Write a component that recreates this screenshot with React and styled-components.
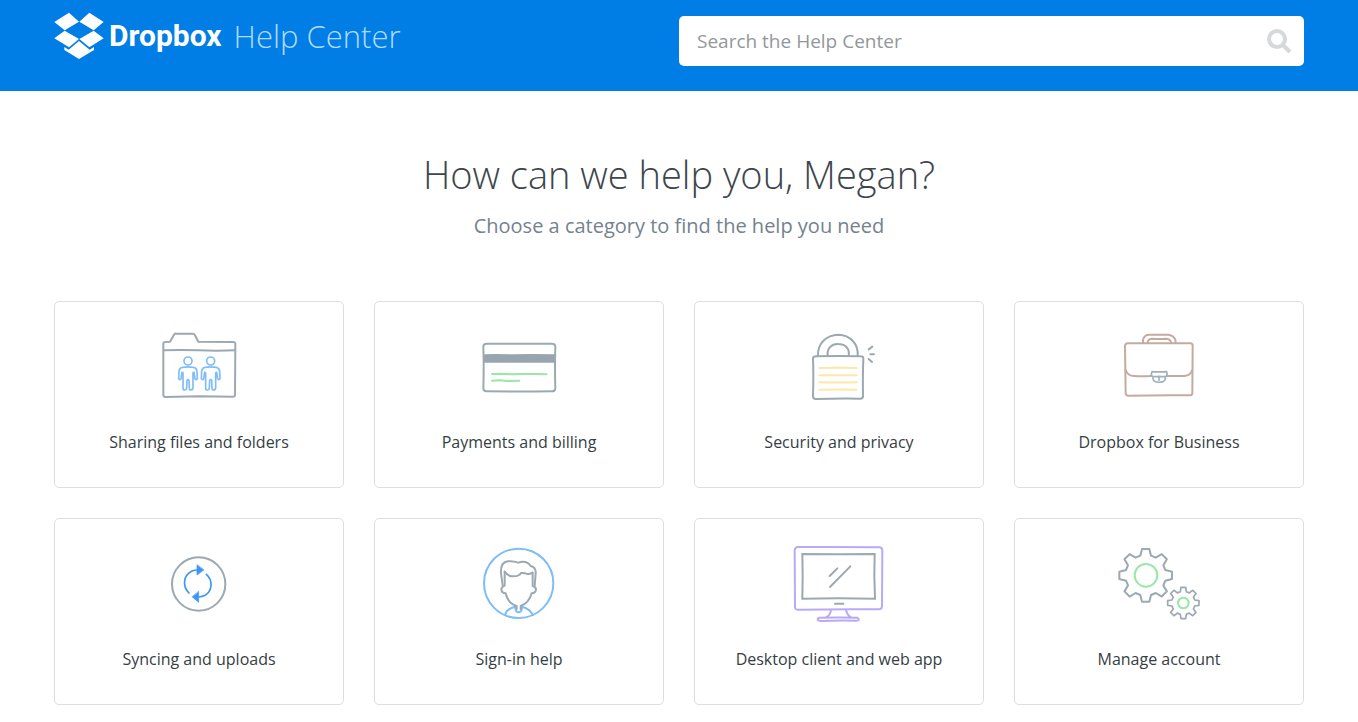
import React from 'react';
import styled, { createGlobalStyle } from 'styled-components';

const GlobalStyle = createGlobalStyle`
  *, *::before, *::after { box-sizing: border-box; }
  body {
    margin: 0;
    background: #fff;
    color: #3d464d;
    font-family: 'Open Sans', 'Noto Sans', sans-serif;
    -webkit-font-smoothing: antialiased;
  }
`;

const Header = styled.header`
  background: #007ee5;
  padding: 0 54px;
`;

const HeaderInner = styled.div`
  display: flex;
  justify-content: space-between;
  align-items: flex-start;
  gap: 30px;
  max-width: 1250px;
  margin: 0 auto;
  padding: 12px 0 25px;
`;

const Brand = styled.a`
  display: flex;
  align-items: center;
  height: 48px;
  color: #fff;
  text-decoration: none;
  white-space: nowrap;
`;

const Wordmark = styled.span`
  margin-left: 5px;
  font-family: Roboto, 'Open Sans', sans-serif;
  font-size: 30px;
  font-weight: 700;
  line-height: 48px;
`;

const SiteName = styled.span`
  margin-left: 12px;
  font-size: 31px;
  font-weight: 300;
  line-height: 48px;
  color: #b3dbff;
`;

const SearchForm = styled.form`
  display: flex;
  align-items: center;
  width: 50%;
  height: 50px;
  margin-top: 4px;
  padding: 0 12px 0 18px;
  background: #fff;
  border-radius: 5px;
`;

const SearchInput = styled.input`
  flex: 1;
  min-width: 0;
  padding: 0;
  border: 0;
  outline: 0;
  background: transparent;
  font-family: inherit;
  font-size: 19px;
  line-height: 26px;
  color: #3d464d;
  &::placeholder { color: #92979b; opacity: 1; }
`;

const SearchButton = styled.button`
  display: flex;
  padding: 0;
  border: 0;
  background: none;
  cursor: pointer;
`;

const Main = styled.main`
  max-width: 1358px;
  margin: 0 auto;
  padding: 55px 54px 17px;
`;

const Title = styled.h1`
  margin: 0;
  font-size: 38px;
  font-weight: 300;
  line-height: 56px;
  text-align: center;
`;

const Subtitle = styled.p`
  margin: 10px 0 0;
  font-size: 20px;
  font-weight: 500;
  line-height: 28px;
  text-align: center;
  color: #74828d;
`;

const Grid = styled.nav`
  display: grid;
  grid-template-columns: repeat(4, minmax(0, 1fr));
  gap: 30px;
  margin-top: 61px;
`;

const Card = styled.a`
  display: flex;
  flex-direction: column;
  align-items: center;
  padding: 20px 8px 33px;
  border: 1px solid #dcdfe2;
  border-radius: 5px;
  color: #363e45;
  text-decoration: none;
`;

const CardLabel = styled.span`
  margin-top: 18px;
  font-size: 16px;
  font-weight: 500;
  line-height: 24px;
  text-align: center;
`;

const Art = styled.svg`
  width: 110px;
  height: 90px;
  fill: none;
  stroke: #9ca9b1;
  stroke-width: 6;
  stroke-linecap: round;
  stroke-linejoin: round;
`;

const BLUE = '#7fbcf8';
const GREEN = '#9be6a8';
const YELLOW = '#ffe6ab';
const BROWN = '#c3aba2';
const PURPLE = '#b9aaf8';

function gearPath(cx, cy, outer, inner, top, base) {
  const points = [];
  for (let i = 0; i < 8; i += 1) {
    const a = (i * Math.PI) / 4;
    const dx = Math.cos(a);
    const dy = Math.sin(a);
    [[inner, -base], [outer, -top], [outer, top], [inner, base]].forEach(([r, t]) => {
      points.push(`${(cx + dx * r - dy * t).toFixed(1)} ${(cy + dy * r + dx * t).toFixed(1)}`);
    });
  }
  return `M${points.join('L')}Z`;
}

const Person = ({ x }) => (
  <g transform={`translate(${x} 0)`} stroke={BLUE} strokeWidth="5">
    <circle cx="0" cy="123" r="12" />
    <path d="M-16 142Q0 139 16 142Q26 143 27 154L28 176Q25 182 21 176L18 157L15 158V204Q14 210 8 210Q4 210 4 204L3 181Q0 176-3 181L-4 204Q-5 210-9 210Q-15 210-15 203V158L-18 157L-21 176Q-25 182-28 176L-27 154Q-26 143-16 142Z" />
  </g>
);

const FolderArt = () => (
  <Art viewBox="-18 6 330 270" aria-hidden="true">
    <path d="M40 224V72Q40 66 46 66L60 65L72 44Q74 40 78 41L128 41Q133 41 135 46L145 65L249 66Q257 66 256 74L255 224Q255 231 248 230L150 229L47 231Q40 231 40 224Z" />
    <path d="M41 91Q90 89 145 91T255 91" />
    <Person x={114} />
    <Person x={182} />
  </Art>
);

const CreditCardArt = () => (
  <Art viewBox="-18 -24 330 270" aria-hidden="true">
    <path d="M50 41Q150 42 246 41Q256 41 256 50Q254 110 256 175Q255 184 246 184Q150 185 50 184Q40 184 40 175Q42 110 40 50Q40 41 50 41Z" />
    <path d="M42 73L80 72L130 73L180 72L254 73V98H42Z" fill="#98a5ae" stroke="none" />
    <path d="M66 132L95 131L125 133L150 132L190 132L230 133M66 152L90 151L110 153L148 152" stroke={GREEN} />
  </Art>
);

const PadlockArt = () => (
  <Art viewBox="-48 -9 330 270" aria-hidden="true">
    <path d="M54 93C52 55 79 30 115 29C151 30 176 57 173 93M83 92C80 71 94 56 115 57C136 57 150 71 146 92" />
    <path d="M46 94Q115 92 182 94Q190 94 190 101Q188 150 189 214Q188 221 181 221Q115 220 47 222Q39 222 39 214Q41 150 39 102Q39 94 46 94Z" />
    <path d="M58 129Q115 128 170 129M58 151Q115 150 170 151M58 172Q115 173 170 172M58 194Q115 193 170 194" stroke={YELLOW} />
    <path d="M206 73L217 65M211 88H222M206 102L216 111" />
  </Art>
);

const BriefcaseArt = () => (
  <Art viewBox="-33 -9 330 270" aria-hidden="true">
    <g stroke={BROWN}>
      <path d="M38 55Q130 54 227 55Q234 56 233 64L232 205Q231 211 224 211Q130 210 39 212Q32 211 32 204L30 63Q31 55 38 55Z" />
      <path d="M84 53V44Q88 29 103 29H160Q176 31 181 44L182 53M98 53Q98 42 111 41Q132 43 154 41Q167 42 168 53" />
      <path d="M32 135Q38 153 57 153Q82 155 108 153M157 153L208 153Q227 151 232 135" />
    </g>
    <path d="M111 140Q132 141 155 140Q158 145 154 154Q143 156 133 154Q121 156 111 154Q107 147 111 140ZM113 156Q114 169 124 171Q134 173 144 170Q151 167 152 156M132 158V166" stroke="#9fb0bd" strokeWidth="5" />
  </Art>
);

const SyncArt = () => (
  <Art viewBox="-48 -18 330 270" aria-hidden="true">
    <circle cx="116" cy="117" r="80" />
    <g stroke="#3d97f1" strokeWidth="5">
      <path d="M87 144C66 123 70 91 96 78Q103 75 111 75M139 88C160 106 157 138 135 151Q127 155 117 156" />
      <path d="M111 60V90L131 75ZM116 140V172L97 156Z" fill="#3d97f1" strokeWidth="2" />
    </g>
  </Art>
);

const PersonArt = () => (
  <Art viewBox="-33 3 330 270" aria-hidden="true">
    <g stroke={BLUE}>
      <circle cx="131" cy="136" r="104" />
      <path d="M90 231Q95 212 121 206M141 206Q166 213 173 231M121 206Q121 223 131 223Q141 222 141 206" />
    </g>
    <path d="M89 101V143Q79 147 79 155Q80 165 92 166C97 187 110 200 125 204V213M137 213V204C155 198 165 184 170 166Q182 165 183 155Q183 147 173 144V104" />
    <path d="M83 142L78 106Q76 73 98 70Q113 68 130 74Q155 66 167 84Q184 88 182 106L179 143M89 101Q99 116 116 115Q132 115 138 105Q150 104 156 108Q165 109 172 104" />
  </Art>
);

const MonitorArt = () => (
  <Art viewBox="-3 3 330 270" aria-hidden="true">
    <g stroke={PURPLE}>
      <path d="M38 27Q160 26 284 28Q292 29 292 38L291 206Q290 215 281 214Q160 213 39 215Q29 215 30 205L29 38Q29 28 38 27Z" />
      <path d="M138 216Q136 232 123 238M183 216Q187 232 198 238M104 239Q160 238 217 239Q222 241 221 246Q217 249 210 248Q160 247 107 249Q98 248 98 243Q99 240 104 239Z" />
    </g>
    <path d="M52 48L160 49L269 48L268 115L270 182L160 181L52 182L53 115Z" strokeLinejoin="miter" />
    <path d="M134 114L157 91M135 147L196 85M150 197H175" />
  </Art>
);

const GearsArt = () => (
  <Art viewBox="-18 -3 330 270" aria-hidden="true">
    <path d={gearPath(107, 106, 79, 59, 11, 16)} />
    <path d={gearPath(220, 189, 47, 34, 7, 9)} strokeWidth="5" />
    <g stroke={GREEN}>
      <circle cx="108" cy="106" r="34" />
      <circle cx="220" cy="189" r="16" />
    </g>
  </Art>
);

const categories = [
  { label: 'Sharing files and folders', Icon: FolderArt },
  { label: 'Payments and billing', Icon: CreditCardArt },
  { label: 'Security and privacy', Icon: PadlockArt },
  { label: 'Dropbox for Business', Icon: BriefcaseArt },
  { label: 'Syncing and uploads', Icon: SyncArt },
  { label: 'Sign-in help', Icon: PersonArt },
  { label: 'Desktop client and web app', Icon: MonitorArt },
  { label: 'Manage account', Icon: GearsArt },
];

const DropboxLogo = () => (
  <svg width="50" height="48" viewBox="42 36 150 144" fill="#fff" aria-hidden="true">
    <path d="M87 38L117 65L74 91L43 66ZM148 38L191 66L161 91L118 65ZM74 92L117 117L87 142L43 115ZM161 92L191 115L148 142L118 117Z" />
    <path d="M117 123L149 149L162 141V150L117 177L73 150V141L86 149Z" />
  </svg>
);

export default function App() {
  return (
    <>
      <GlobalStyle />
      <Header>
        <HeaderInner>
          <Brand href="#">
            <DropboxLogo />
            <Wordmark>Dropbox</Wordmark>
            <SiteName>Help Center</SiteName>
          </Brand>
          <SearchForm role="search">
            <SearchInput type="search" aria-label="Search the Help Center" placeholder="Search the Help Center" />
            <SearchButton type="button" aria-label="Search">
              <svg width="26" height="26" viewBox="0 0 26 26" fill="none" stroke="#d5d9dc" strokeWidth="4" aria-hidden="true">
                <circle cx="11" cy="11" r="8" />
                <path d="M17 17L24 24" />
              </svg>
            </SearchButton>
          </SearchForm>
        </HeaderInner>
      </Header>
      <Main>
        <Title>How can we help you, Megan?</Title>
        <Subtitle>Choose a category to find the help you need</Subtitle>
        <Grid aria-label="Help categories">
          {categories.map(({ label, Icon }) => (
            <Card href="#" key={label}>
              <Icon />
              <CardLabel>{label}</CardLabel>
            </Card>
          ))}
        </Grid>
      </Main>
    </>
  );
}
